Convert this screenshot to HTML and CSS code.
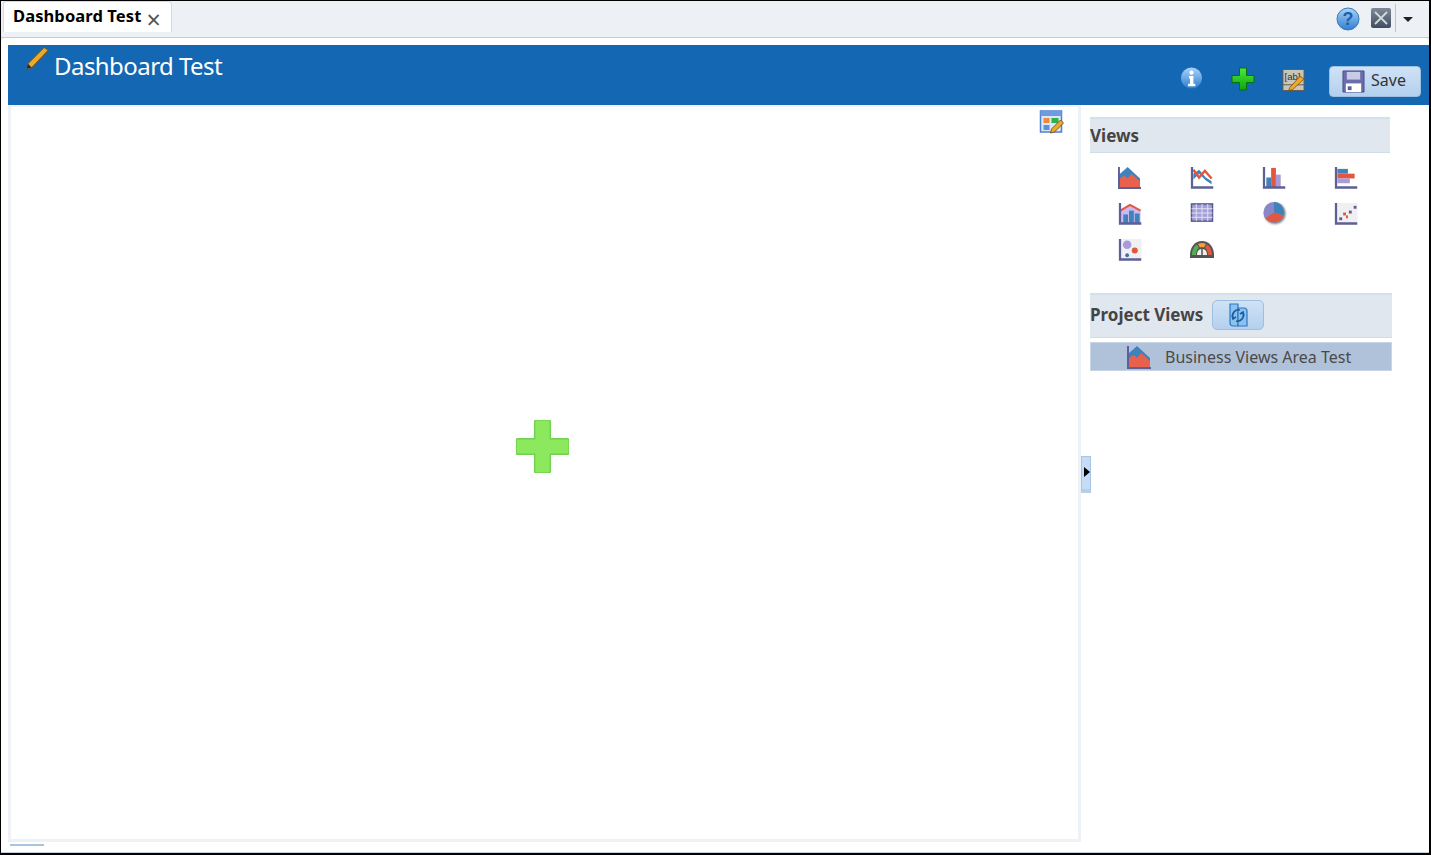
FILE: index.html
```html
<!DOCTYPE html>
<html lang="en">
<head>
    <meta charset="UTF-8">
    <title>Dashboard Test</title>
    <link rel="stylesheet" href="styles.css">
</head>
<body>
    <svg class="defs" width="0" height="0">
        <defs>
            <linearGradient id="blueBall" x1="0" y1="0" x2="0" y2="1">
                <stop offset="0" stop-color="#a9d4f7"/>
                <stop offset="1" stop-color="#2f7fd0"/>
            </linearGradient>
            <linearGradient id="greenPlus" x1="0" y1="0" x2="0" y2="1">
                <stop offset="0" stop-color="#4fe83c"/>
                <stop offset="1" stop-color="#0aa70c"/>
            </linearGradient>
            <linearGradient id="darkTile" x1="0" y1="0" x2="0" y2="1">
                <stop offset="0" stop-color="#7f8a99"/>
                <stop offset="1" stop-color="#3f4d60"/>
            </linearGradient>
            <symbol id="axis" viewBox="0 0 24 24">
                <path d="M1.500 1v21.500H24" fill="none" stroke="#5d5f97" stroke-width="2.500"/>
            </symbol>
            <symbol id="area" viewBox="0 0 24 24">
                <path d="M1 22V9l9-8 13 12v9z" fill="#3f83bd"/>
                <path d="M2 22v-9l5-3 3 3 4-5 9 8v6z" fill="#e8604e"/>
                <path d="M1 1v22h23" fill="none" stroke="#5d5f97" stroke-width="2"/>
            </symbol>
        </defs>
    </svg>

    <div class="window">
        <div class="tabbar">
            <div class="tab">
                <span class="tab-title">Dashboard Test</span>
                <span class="tab-close">&times;</span>
            </div>
            <div class="tabbar-tools">
                <svg class="icon-help" viewBox="0 0 24 24">
                    <circle cx="12" cy="12" r="11" fill="url(#blueBall)" stroke="#3a78b8"/>
                    <text x="12" y="18" class="icon-letter">?</text>
                </svg>
                <svg class="icon-closeall" viewBox="0 0 20 20">
                    <rect width="20" height="20" rx="2" fill="url(#darkTile)"/>
                    <path d="M4 4l12 12M16 4L4 16" stroke="#d4d8dd" stroke-width="1.800"/>
                </svg>
                <span class="tool-sep"></span>
                <span class="tool-arrow"></span>
            </div>
        </div>

        <div class="panel">
            <div class="header">
                <div class="header-title">
                    <svg class="icon-title-pencil" viewBox="0 0 24 24">
                        <path d="M2 18L19 1l4 3L6 22l-5 1z" fill="#eda92a" stroke="#8a5208" stroke-width="1"/>
                        <path d="M1 23l1-5 4 4z" fill="#2e2a22"/>
                    </svg>
                    <h1>Dashboard Test</h1>
                </div>
                <div class="header-actions">
                    <svg class="icon-info" viewBox="0 0 24 24">
                        <circle cx="12" cy="12" r="11" fill="url(#blueBall)"/>
                        <circle cx="12" cy="6.500" r="2.200" fill="#fff"/>
                        <path d="M9.500 10h4.500v8h2v2.500H8.500V18h2v-5.500h-1z" fill="#fff"/>
                    </svg>
                    <svg class="icon-add" viewBox="0 0 24 24">
                        <path d="M8.500 1h7v7.500H23v7h-7.500V23h-7v-7.500H1v-7h7.500z" fill="url(#greenPlus)" stroke="#0b6d14"/>
                    </svg>
                    <svg class="icon-rename" viewBox="0 0 24 24">
                        <rect x="1" y="1" width="22" height="22" fill="#c9c5b8" stroke="#5f5c52"/>
                        <text x="11" y="12" class="icon-ab">[ab]</text>
                        <path d="M1 17h22" stroke="#5f5c52"/>
                        <path d="M8 20L19 8l4 3-12 11-4 1z" fill="#eda92a" stroke="#7c4a08" stroke-width=".8"/>
                    </svg>
                    <button class="save-button">
                        <svg class="icon-save" viewBox="0 0 24 24">
                            <path d="M1 1h22v22H1z" fill="#6a6cab" stroke="#4d4f87"/>
                            <path d="M5 2h14v8H5z" fill="#c9cbe6"/>
                            <path d="M4 14h16v9H4z" fill="#fff"/>
                            <path d="M6 17h4v4H6z" fill="#5d5f97"/>
                        </svg>
                        <span class="save-label">Save</span>
                    </button>
                </div>
            </div>

            <div class="main">
                <div class="canvas">
                    <svg class="icon-layout" viewBox="0 0 24 24">
                        <rect x="1" y="1" width="21" height="21" fill="#dbe8fa" stroke="#4f7fd0" stroke-width="1.500"/>
                        <rect x="1" y="1" width="21" height="5" fill="#6f9be0"/>
                        <rect x="4" y="8" width="6" height="5" fill="#ef8a3c"/>
                        <rect x="12" y="8" width="7" height="5" fill="#2fb04a"/>
                        <rect x="4" y="15" width="6" height="5" fill="#5f8fdc"/>
                        <path d="M11 23l1-4 9-9 3 3-9 9z" fill="#eda92a" stroke="#6c4208" stroke-width=".8"/>
                    </svg>
                    <svg class="icon-drop" viewBox="0 0 54 54">
                        <path d="M19 2q0-2 2-2h12q2 0 2 2v17h17q2 0 2 2v12q0 2-2 2H35v17q0 2-2 2H21q-2 0-2-2V35H2q-2 0-2-2V21q0-2 2-2h17z" fill="#8ce85c" stroke="#72d052" stroke-width="1.500"/>
                    </svg>
                </div>

                <div class="side">
                    <div class="side-head views-head">Views</div>
                    <div class="view-grid">
                        <svg class="view-icon"><use href="#area" width="23" height="23"/></svg>
                        <svg class="view-icon" viewBox="0 0 24 24">
                            <path d="M3 8l6-4 7 8 6 4v3L16 15 9 8l-6 6z" fill="#3f83bd"/>
                            <path d="M3 4l6 8 6-7 7 8" fill="none" stroke="#e0593f" stroke-width="2.500"/>
                            <use href="#axis" width="24" height="24"/>
                        </svg>
                        <svg class="view-icon" viewBox="0 0 24 24">
                            <rect x="4" y="12" width="5" height="10" fill="#3f83bd"/>
                            <rect x="9" y="2" width="5" height="20" fill="#e0593f"/>
                            <rect x="14" y="9" width="5" height="13" fill="#a99bd8"/>
                            <use href="#axis" width="24" height="24"/>
                        </svg>
                        <svg class="view-icon" viewBox="0 0 24 24">
                            <rect x="3" y="3" width="11" height="5" fill="#3f83bd"/>
                            <rect x="3" y="8" width="18" height="5" fill="#e0593f"/>
                            <rect x="3" y="13" width="13" height="5" fill="#a99bd8"/>
                            <use href="#axis" width="24" height="24"/>
                        </svg>
                        <svg class="view-icon" viewBox="0 0 24 24">
                            <path d="M2 22V8l10-6 11 6v14z" fill="#cbb9ee"/>
                            <path d="M2 9l10-6 11 6" fill="none" stroke="#e0593f" stroke-width="2"/>
                            <rect x="5" y="13" width="5" height="9" fill="#3f83bd"/>
                            <rect x="11" y="9" width="5" height="13" fill="#3f83bd"/>
                            <rect x="17" y="12" width="5" height="10" fill="#3f83bd"/>
                            <use href="#axis" width="24" height="24"/>
                        </svg>
                        <svg class="view-icon" viewBox="0 0 24 24">
                            <rect x="1" y="2" width="22" height="18" fill="#a3a0d6" stroke="#55578f" stroke-width="1.500"/>
                            <path d="M1 7h22M1 11.500h22M1 16h22M6 2v18M12 2v18M18 2v18" stroke="#e4e2f6" stroke-width="1"/>
                        </svg>
                        <svg class="view-icon view-icon-pie" viewBox="0 0 24 24">
                            <circle cx="12" cy="11" r="11" fill="#8a86c8"/>
                            <path d="M12 11V0a11 11 0 0 1 10 14z" fill="#3f83bd"/>
                            <path d="M12 11l10 3a11 11 0 0 1-19 3z" fill="#e0593f"/>
                        </svg>
                        <svg class="view-icon" viewBox="0 0 24 24">
                            <rect x="2" y="1" width="22" height="21" fill="#f0f0f2"/>
                            <use href="#axis" width="24" height="24"/>
                            <rect x="5" y="16" width="3" height="3" fill="#5d5f97"/>
                            <rect x="9" y="11" width="3" height="3" fill="#e0593f"/>
                            <rect x="12" y="14" width="2" height="3" fill="#e0593f"/>
                            <rect x="15" y="9" width="3" height="3" fill="#5d5f97"/>
                            <rect x="20" y="4" width="3" height="3" fill="#5d5f97"/>
                        </svg>
                        <svg class="view-icon" viewBox="0 0 24 24">
                            <rect x="2" y="1" width="22" height="21" fill="#f0f0f2"/>
                            <use href="#axis" width="24" height="24"/>
                            <circle cx="9" cy="7" r="4.500" fill="#a99bd8"/>
                            <circle cx="17" cy="13" r="3.200" fill="#e0593f"/>
                            <circle cx="9" cy="18" r="2" fill="#3f6fa8"/>
                        </svg>
                        <svg class="view-icon-gauge" viewBox="0 0 24 17">
                            <path d="M0 17V14C0 6 5 0 12 0s12 6 12 14v3z" fill="#55525a"/>
                            <path d="M2 14C2 9 4 5 7 3.500l2 3.500C7 8 6 11 6 14z" fill="#52b04a"/>
                            <path d="M8 3a9 9 0 0 1 8 0l-2 3.500a5 5 0 0 0-4 0z" fill="#efa332"/>
                            <path d="M17 3.500C20 5 22 9 22 14h-4c0-3-1-6-3-7z" fill="#e0593f"/>
                            <path d="M7 14c0-4 2-6 5-6s5 2 5 6z" fill="#f4f1ec"/>
                            <path d="M12 14V8" stroke="#55525a" stroke-width="1.500"/>
                        </svg>
                    </div>

                    <div class="side-head project-head">
                        <span>Project Views</span>
                        <button class="refresh-button">
                            <svg class="icon-refresh" viewBox="0 0 24 24">
                                <path d="M4 1h8v22H7a3 3 0 0 1-3-3z" fill="#8cc2ef" stroke="#2c77c4" stroke-width="1.200"/>
                                <path d="M12 5h6a3 3 0 0 1 3 3v15h-9z" fill="#8cc2ef" stroke="#2c77c4" stroke-width="1.200"/>
                                <path d="M14 7a6 6 0 0 0-7 8M6 12l1 4 3-2M10 18a6 6 0 0 0 7-8M18 13l-1-4-3 2" fill="none" stroke="#1c5c9e" stroke-width="1.600"/>
                            </svg>
                        </button>
                    </div>
                    <div class="project-item">
                        <svg class="item-icon"><use href="#area"/></svg>
                        <span>Business Views Area Test</span>
                    </div>
                </div>

                <div class="collapse-handle"><span class="collapse-arrow"></span></div>
            </div>
            <div class="scroll-mark"></div>
        </div>
    </div>
</body>
</html>
```

FILE: styles.css
```css
html, body {
    margin: 0;
    padding: 0;
    height: 100%;
}

body {
    font-family: "Noto Sans", Tahoma, sans-serif;
    background-color: #fff;
    overflow: hidden;
}

.defs {
    position: absolute;
}

.window {
    height: 855px;
    box-sizing: border-box;
    border: 1px solid #000;
    border-width: 1px 2px 2px 1px;
    background-color: #edf1f5;
    display: flex;
    flex-direction: column;
}

/* tab strip */
.tabbar {
    height: 37px;
    flex: none;
    display: flex;
    justify-content: space-between;
    align-items: flex-start;
    box-sizing: border-box;
    border-bottom: 1px solid #c3ccd6;
    padding-left: 2px;
}

.tab {
    height: 31px;
    width: 169px;
    box-sizing: border-box;
    background-color: #fff;
    border: 1px solid #d5dbe3;
    border-bottom: none;
    border-radius: 4px 4px 0 0;
    padding: 3px 0 0 9px;
    display: flex;
    align-items: flex-start;
}

.tab-title {
    font-size: 16.500px;
    font-weight: bold;
    color: #000;
    line-height: 22px;
    letter-spacing: 0.1px;
}

.tab-close {
    font-size: 25px;
    line-height: 28px;
    color: #555;
    margin-left: 5px;
}

.tabbar-tools {
    display: flex;
    align-items: center;
    height: 36px;
    padding-right: 16px;
}

.icon-help {
    width: 24px;
    height: 24px;
    margin-top: -1px;
}

.icon-letter {
    font-family: "Liberation Sans", sans-serif;
    font-size: 18px;
    font-weight: bold;
    fill: #1e5fa8;
    text-anchor: middle;
}

.icon-closeall {
    width: 20px;
    height: 20px;
    margin: -2px 0 0 11px;
}

.tool-sep {
    width: 1px;
    height: 28px;
    background-color: #b9c5d3;
    margin: -2px 0 0 4px;
}

.tool-arrow {
    width: 0;
    height: 0;
    border: 5px solid transparent;
    border-top: 5px solid #222;
    border-bottom: none;
    margin-left: 7px;
}

/* main panel */
.panel {
    flex: 1;
    background-color: #fff;
    border-radius: 5px 5px 0 0;
    border-bottom: 1px solid #c3d0dd;
    padding: 7px 0 0 7px;
    display: flex;
    flex-direction: column;
    min-height: 0;
}

.header {
    height: 60px;
    flex: none;
    background-color: #1467b3;
    display: flex;
    justify-content: space-between;
}

.header-title {
    display: flex;
    align-items: flex-start;
    padding-left: 18px;
}

.icon-title-pencil {
    width: 23px;
    height: 24px;
    margin-top: 1px;
    filter: blur(0.3px);
}

.header-title h1 {
    margin: 4px 0 0 5px;
    font-size: 24px;
    font-weight: normal;
    line-height: 34px;
    letter-spacing: -0.55px;
    color: #fff;
}

.header-actions {
    display: flex;
    align-items: flex-end;
    padding: 0 8px 8px 0;
}

.icon-info {
    width: 23px;
    height: 24px;
    margin-bottom: 7px;
}

.icon-add {
    width: 24px;
    height: 24px;
    margin: 0 0 6px 28px;
}

.icon-rename {
    width: 23px;
    height: 24px;
    margin: 0 0 5px 27px;
}

.icon-ab {
    font-family: "Liberation Sans", sans-serif;
    font-size: 10px;
    fill: #333;
    text-anchor: middle;
}

.save-button {
    width: 92px;
    height: 31px;
    margin-left: 24px;
    box-sizing: border-box;
    border: 1px solid #9dbfe0;
    border-radius: 4px;
    background: linear-gradient(#cfe2f6, #b4d0ee);
    color: #333;
    font-family: inherit;
    font-size: 16px;
    padding: 0 0 0 12px;
    display: flex;
    align-items: center;
    gap: 6px;
}

.save-label {
    margin-bottom: 4px;
}

.icon-save {
    width: 23px;
    height: 23px;
}

.main {
    flex: 1;
    display: flex;
    position: relative;
    min-height: 0;
}

/* drop area */
.canvas {
    width: 1073px;
    height: 737px;
    flex: none;
    box-sizing: border-box;
    border: 3px solid #eef2f6;
    border-top-width: 2px;
    position: relative;
    display: flex;
    align-items: center;
    justify-content: center;
}

.icon-layout {
    position: absolute;
    top: 3px;
    right: 14px;
    width: 25px;
    height: 24px;
}

.icon-drop {
    width: 53px;
    height: 53px;
    margin: 0 0 54px -5px;
    filter: blur(0.4px);
}

/* views panel */
.side {
    width: 302px;
    margin-left: 9px;
    padding-top: 12px;
}

.side-head {
    box-sizing: border-box;
    background-color: #e1e7ef;
    border-top: 2px solid #d6e0ea;
    border-bottom: 1px solid #d3dbe5;
    font-size: 17px;
    font-weight: bold;
    color: #444;
    display: flex;
    align-items: center;
}

.views-head {
    width: 300px;
    height: 36px;
}

.view-grid {
    display: grid;
    grid-template-columns: repeat(4, 24px);
    grid-auto-rows: 23px;
    column-gap: 48px;
    row-gap: 13px;
    padding: 13px 0 0 28px;
    height: 127px;
}

.view-icon {
    width: 24px;
    height: 23px;
    filter: blur(0.35px);
}

.view-icon-pie {
    filter: blur(0.35px) drop-shadow(1px 1px 1px #777);
}

.view-icon-gauge {
    width: 24px;
    height: 17px;
    margin-top: 3px;
    filter: blur(0.35px);
}

.project-head {
    height: 45px;
    gap: 9px;
    padding-bottom: 3px;
}

.refresh-button {
    width: 52px;
    height: 30px;
    box-sizing: border-box;
    border: 1px solid #9dbfe0;
    border-radius: 5px;
    background: linear-gradient(#cfe2f6, #b4d0ee);
    padding: 0;
    display: flex;
    align-items: center;
    justify-content: center;
}

.icon-refresh {
    width: 24px;
    height: 24px;
}

.project-item {
    height: 29px;
    margin-top: 4px;
    box-sizing: border-box;
    background-color: #b0c2d9;
    border: 1px solid #c7d5e5;
    display: flex;
    align-items: center;
    padding-left: 36px;
    font-size: 16px;
    color: #4a4a4a;
}

.item-icon {
    width: 24px;
    height: 24px;
    margin-right: 14px;
    filter: blur(0.35px);
}

.collapse-handle {
    position: absolute;
    left: 1073px;
    top: 351px;
    width: 10px;
    height: 37px;
    box-sizing: border-box;
    background-color: #c4dcf5;
    border: 1px solid #a6c5e4;
    border-bottom: 4px solid #b5cfea;
    padding-bottom: 2px;
    display: flex;
    align-items: center;
}

.collapse-arrow {
    width: 0;
    height: 0;
    border: 5px solid transparent;
    border-left: 6px solid #000;
    border-right: none;
    margin-left: 2px;
}

.scroll-mark {
    width: 34px;
    height: 2px;
    background-color: #a9c4de;
    margin: 0 0 6px 2px;
    flex: none;
}
```
